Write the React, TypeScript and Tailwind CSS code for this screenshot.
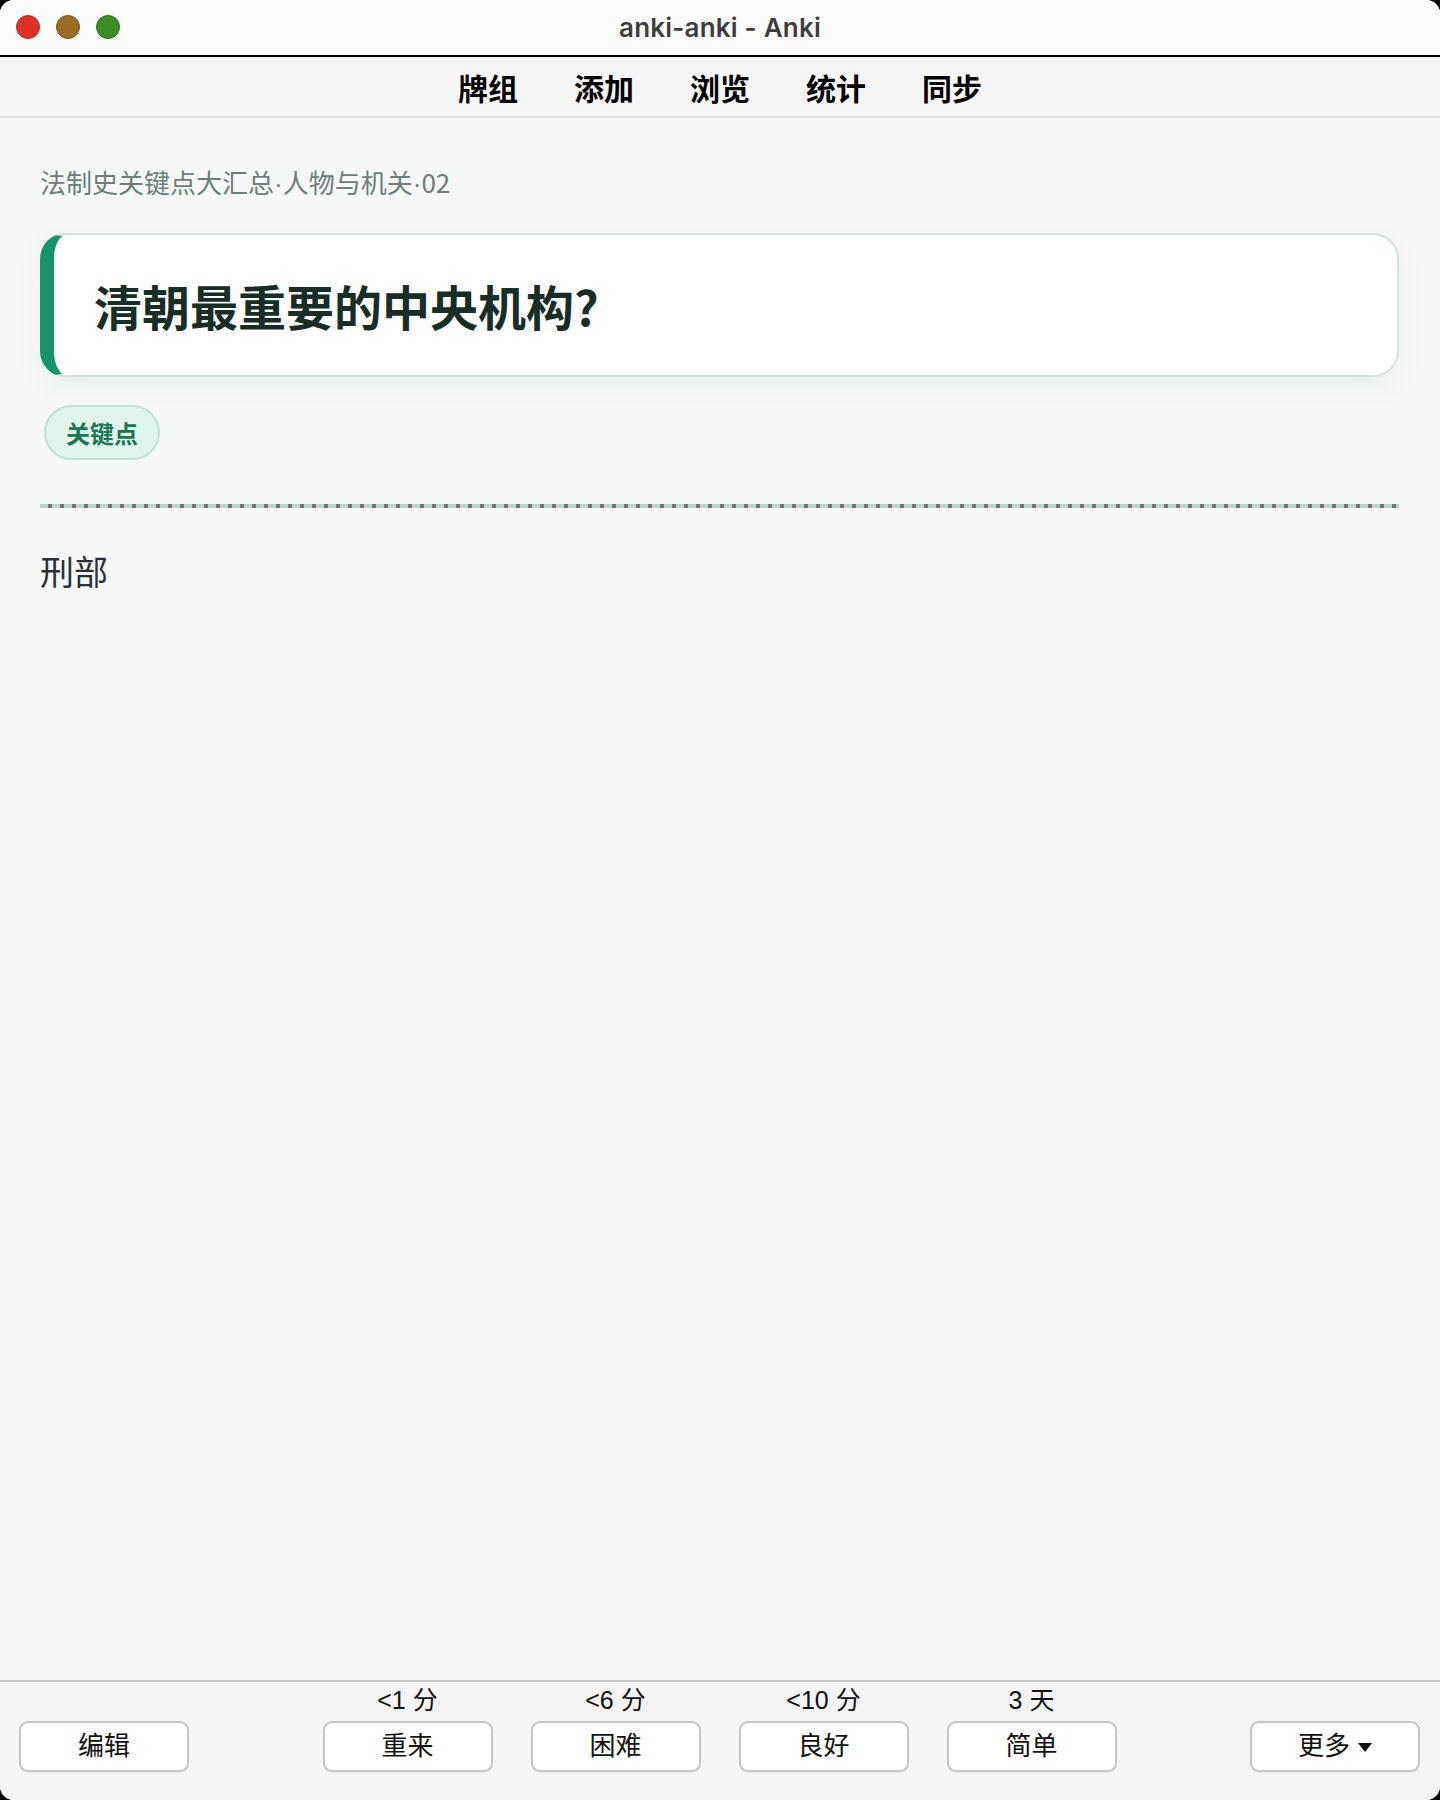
import React from "react";

const cjk = '"Noto Sans CJK SC", "Noto Sans", sans-serif';
const ui = 'Inter, "Noto Sans CJK SC", sans-serif';
const heiti = '"Liberation Sans", "Noto Sans CJK SC", sans-serif';
const latin = '"Liberation Sans", sans-serif';

const navItems = ["牌组", "添加", "浏览", "统计", "同步"];

const ratings = [
  { due: "<1 分", label: "重来" },
  { due: "<6 分", label: "困难" },
  { due: "<10 分", label: "良好" },
  { due: "3 天", label: "简单" },
];

function Btn({ children }: { children: React.ReactNode }) {
  return (
    <button
      className="flex h-[51px] w-[170px] items-center justify-center gap-[8px] rounded-[9px] border-2 border-[#c6c6c6] bg-white text-[26px] text-[#111] shadow-[0_1px_1px_rgba(0,0,0,0.05)]"
      style={{ fontFamily: heiti }}
    >
      {children}
    </button>
  );
}

function Dot() {
  return <span style={{ fontFamily: latin }}>·</span>;
}

export default function App() {
  return (
    <div className="h-[1800px] w-[1440px] bg-black">
      <div className="flex h-full w-full flex-col overflow-hidden rounded-[14px] bg-white">
        {/* title bar */}
        <div className="relative flex h-[55px] shrink-0 items-center justify-center bg-[#fdfdfd]">
          <div className="absolute left-[16px] top-[15px] flex gap-[16px]">
            <span className="h-[24px] w-[24px] rounded-full border border-[#b72a20] bg-[#df3027]" />
            <span className="h-[24px] w-[24px] rounded-full border border-[#7a5418] bg-[#9a6c24]" />
            <span className="h-[24px] w-[24px] rounded-full border border-[#2d6e1c] bg-[#3d8b27]" />
          </div>
          <span
            className="text-[26px] font-semibold tracking-[0.2px] text-[#3d3d3d]"
            style={{ fontFamily: ui }}
          >
            anki-anki - Anki
          </span>
        </div>
        <div className="h-[2px] shrink-0 bg-black" />

        {/* top toolbar */}
        <div className="flex h-[61px] shrink-0 items-center justify-center gap-[56px] border-b-2 border-[#e2e2e2] bg-[#f5f5f5]">
          {navItems.map((n) => (
            <span
              key={n}
              className="text-[30px] font-bold leading-none text-black"
              style={{ fontFamily: cjk }}
            >
              {n}
            </span>
          ))}
        </div>

        {/* card area */}
        <main
          className="flex-1 bg-[#f6f9f8] pl-[40px] pr-[41px] pt-[46px]"
          style={{ fontFamily: cjk }}
        >
          <div className="text-[26px] leading-[36px] text-[#6b7f78]">
            法制史关键点大汇总<Dot />人物与机关<Dot />02
          </div>

          <div className="mt-[31px] rounded-[26px] border-2 border-l-[14px] border-[#d3e5de] border-l-[#15946a] bg-white py-[41px] pl-[40px] shadow-[0_10px_28px_rgba(20,50,40,0.06)]">
            <div className="text-[48px] font-bold leading-[58px] text-[#182d26]">
              清朝最重要的中央机构?
            </div>
          </div>

          <div className="ml-[4px] mt-[28px] flex h-[55px] w-fit items-center rounded-full border-2 border-[#bde3d4] bg-[#e0f4ec] px-[20px] text-[24px] font-bold text-[#1b7654]">
            关键点
          </div>

          <div className="mt-[44px] h-[4px] bg-[repeating-linear-gradient(90deg,#b7d7cc_0px,#b7d7cc_8px,#747474_8px,#747474_12px)]" />

          <div className="mt-[39px] text-[34px] leading-[48px] text-[#26313b]">
            刑部
          </div>
        </main>

        {/* answer buttons */}
        <div
          className="flex h-[120px] shrink-0 items-end justify-between border-t-2 border-[#c8c8c8] bg-[#f4f4f4] pb-[28px] pl-[19px] pr-[20px]"
          style={{ fontFamily: heiti }}
        >
          <Btn>编辑</Btn>
          <div className="flex gap-[38px]">
            {ratings.map((r) => (
              <div key={r.label} className="flex flex-col items-center">
                <span className="mb-[7px] text-[25px] leading-[28px] text-[#111]">
                  {r.due}
                </span>
                <Btn>{r.label}</Btn>
              </div>
            ))}
          </div>
          <Btn>
            <span>更多</span>
            <svg width="14" height="9" viewBox="0 0 14 9" className="mt-[2px]">
              <path d="M0 0 H14 L7 9 Z" fill="#111" />
            </svg>
          </Btn>
        </div>
      </div>
    </div>
  );
}
